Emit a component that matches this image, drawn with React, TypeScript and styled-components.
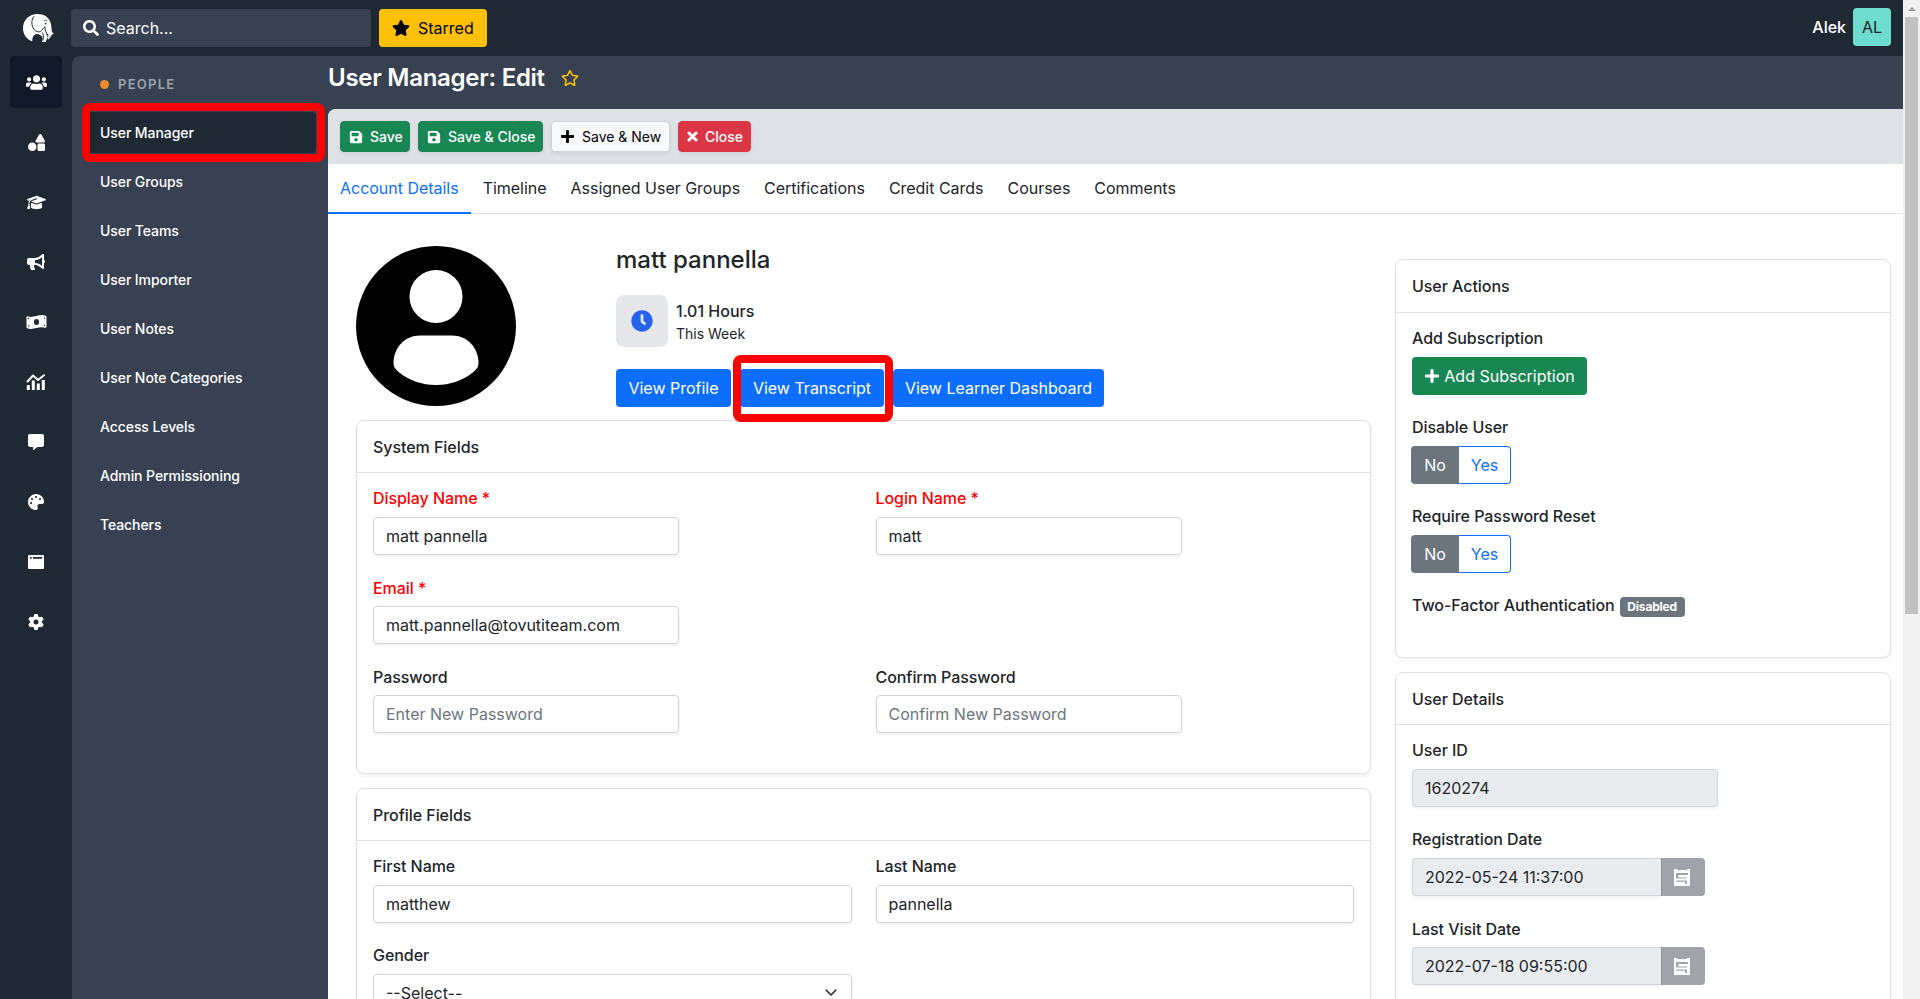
import React from "react";
import styled, { createGlobalStyle, css } from "styled-components";
import {
  FaUsers,
  FaShapes,
  FaBullhorn,
  FaSearch,
  FaStar,
  FaRegStar,
  FaSave,
  FaPlus,
  FaClock,
  FaPalette,
  FaCommentAlt,
} from "react-icons/fa";
import { FaGraduationCap, FaGear } from "react-icons/fa6";

const GlobalStyle = createGlobalStyle`
  *, *::before, *::after { box-sizing: border-box; }
  html, body, #root { height: 100%; }
  body {
    margin: 0;
    overflow: hidden;
    background: #1f2933;
    color: #212529;
    font: 400 16px/24px Inter, "Liberation Sans", sans-serif;
  }
  input, button { font: inherit; }
  svg { display: block; flex: none; }
`;

const Window = styled.div`
  display: flex;
  height: 999px;
`;

const Page = styled.div`
  flex: 1;
  min-width: 0;
  display: flex;
  flex-direction: column;
`;

const TopBar = styled.header`
  height: 56px;
  flex: none;
  display: flex;
  align-items: center;
  padding: 0 12px 0 22px;
`;

const SearchBox = styled.div`
  width: 300px;
  height: 38px;
  margin: 0 8px 0 16px;
  padding-left: 12px;
  display: flex;
  align-items: center;
  gap: 7px;
  border-radius: 4px;
  background: #384152;
  color: #fff;
`;

const StarredButton = styled.button`
  width: 108px;
  height: 38px;
  padding: 0 0 0 13px;
  display: flex;
  align-items: center;
  gap: 8px;
  border: 0;
  border-radius: 4px;
  background: #ffc107;
  color: #000;
`;

const Account = styled.div`
  margin-left: auto;
  display: flex;
  align-items: center;
  gap: 7px;
  margin-top: -2px;
  color: #fff;
  font-weight: 500;
`;

const Initials = styled.div`
  width: 38px;
  height: 38px;
  border-radius: 4px;
  background: #6edcce;
  color: #212529;
  font-weight: 400;
  display: flex;
  align-items: center;
  justify-content: center;
`;

const Body = styled.div`
  flex: 1;
  min-height: 0;
  display: flex;
`;

const Rail = styled.nav`
  width: 72px;
  flex: none;
  padding: 0 10px;
  display: flex;
  flex-direction: column;
  gap: 8px;
`;

const RailItem = styled.div<{ $active?: boolean }>`
  height: 52px;
  flex: none;
  display: flex;
  align-items: center;
  justify-content: center;
  border-radius: 4px;
  color: #fff;
  background: ${(p) => (p.$active ? "#111827" : "transparent")};
`;

const Shell = styled.div`
  flex: 1;
  min-width: 0;
  display: flex;
  border-top-left-radius: 8px;
  background: #384152;
`;

const SideMenu = styled.aside`
  width: 256px;
  flex: none;
  padding: 16px 12px 0 14px;
  color: #fff;
  font-size: 14px;
  font-weight: 500;
  letter-spacing: -0.08px;
`;

const MenuHeading = styled.div`
  height: 24px;
  margin-bottom: 16px;
  padding-left: 14px;
  display: flex;
  align-items: center;
  gap: 9px;
  color: #9ca3af;
  font-size: 13px;
  font-weight: 600;
  letter-spacing: 1.25px;
`;

const Dot = styled.span`
  width: 9px;
  height: 9px;
  border-radius: 50%;
  background: #ed8b2d;
`;

const MenuItem = styled.div<{ $active?: boolean }>`
  position: relative;
  height: 41px;
  margin-bottom: 8px;
  padding-left: 14px;
  display: flex;
  align-items: center;
  border-radius: 4px;
  background: ${(p) => (p.$active ? "#1f2933" : "transparent")};
`;

const Highlight = styled.span<{ $inset: string }>`
  position: absolute;
  z-index: 2;
  inset: ${(p) => p.$inset};
  border: 8px solid #fe0000;
  border-radius: 8px;
  pointer-events: none;
`;

const Main = styled.main`
  flex: 1;
  min-width: 0;
  display: flex;
  flex-direction: column;
`;

const TitleRow = styled.div`
  height: 53px;
  flex: none;
  padding-bottom: 9px;
  display: flex;
  align-items: center;
  gap: 16px;
`;

const Title = styled.h1`
  margin: 0;
  color: #fff;
  font-size: 24px;
  font-weight: 600;
  line-height: 30px;
  letter-spacing: -0.27px;
`;

const Content = styled.div`
  flex: 1;
  min-height: 0;
  overflow: hidden;
  border-top-left-radius: 8px;
  background: #fff;
`;

const Toolbar = styled.div`
  height: 55px;
  padding: 12px;
  display: flex;
  gap: 8px;
  background: #dee1e6;
`;

const tones = {
  green: css`
    background: #198754;
    border-color: #198754;
    color: #fff;
  `,
  light: css`
    background: #f8f9fb;
    border-color: #d0d4da;
    color: #000;
    font-weight: 400;
  `,
  red: css`
    background: #dc3545;
    border-color: #dc3545;
    color: #fff;
  `,
};

const ToolButton = styled.button<{ $tone: keyof typeof tones; $width: number }>`
  width: ${(p) => p.$width}px;
  height: 31px;
  padding: 0 0 0 8px;
  display: flex;
  align-items: center;
  gap: 7px;
  border: 1px solid;
  border-radius: 4px;
  box-shadow: 0 2px 4px rgba(0, 0, 0, 0.08);
  font-size: 14px;
  font-weight: 500;
  white-space: nowrap;
  ${(p) => tones[p.$tone]}
`;

const Tabs = styled.div`
  height: 50px;
  display: flex;
  border-bottom: 1px solid #dee2e6;
`;

const Tab = styled.div<{ $active?: boolean }>`
  height: 50px;
  padding: 12px 12px 0;
  white-space: nowrap;
  letter-spacing: -0.02px;
  color: ${(p) => (p.$active ? "#0d6efd" : "#212529")};
  border-bottom: 2px solid ${(p) => (p.$active ? "#0d6efd" : "transparent")};
`;

const Columns = styled.div`
  padding: 32px 12px 0 28px;
  display: flex;
  gap: 24px;
`;

const Primary = styled.section`
  width: 1015px;
  flex: none;
`;

const Secondary = styled.section`
  flex: 1;
  padding-top: 13px;
`;

const Profile = styled.div`
  height: 174px;
  display: flex;
  gap: 100px;
`;

const ProfileName = styled.h2`
  margin: -1px 0 20px;
  font-size: 24px;
  font-weight: 500;
  line-height: 30px;
`;

const Hours = styled.div`
  height: 52px;
  margin-bottom: 22px;
  display: flex;
  align-items: center;
  gap: 8px;
`;

const ClockTile = styled.div`
  width: 52px;
  height: 52px;
  display: flex;
  align-items: center;
  justify-content: center;
  border-radius: 8px;
  background: #e5e7eb;
  color: #2563eb;
`;

const HoursText = styled.div`
  padding-top: 1px;
  font-weight: 500;
  line-height: 23px;
`;

const HoursNote = styled.div`
  font-size: 14px;
  font-weight: 400;
  line-height: 21px;
`;

const ButtonRow = styled.div`
  display: flex;
  gap: 9px;
`;

const ActionButton = styled.button<{ $width: number; $green?: boolean }>`
  position: relative;
  width: ${(p) => p.$width}px;
  height: 38px;
  padding: 0;
  display: flex;
  align-items: center;
  justify-content: center;
  gap: 4px;
  border: 0;
  border-radius: 4px;
  background: ${(p) => (p.$green ? "#198754" : "#0d6efd")};
  color: #fff;
  white-space: nowrap;
`;

const Card = styled.div<{ $height: number }>`
  height: ${(p) => p.$height}px;
  margin-bottom: 14px;
  border: 1px solid #dfe0e2;
  border-radius: 8px;
  box-shadow: 0 2px 4px rgba(0, 0, 0, 0.06);
  background: #fff;
`;

const CardTitle = styled.div<{ $tall?: boolean }>`
  height: ${(p) => (p.$tall ? 53 : 52)}px;
  padding: 14px 16px 0;
  border-bottom: 1px solid #dfe0e2;
  font-weight: 500;
  letter-spacing: -0.05px;
`;

const FieldGrid = styled.div<{ $columns: number }>`
  padding: 13px 16px 0;
  display: grid;
  grid-template-columns: repeat(${(p) => p.$columns}, 1fr);
  column-gap: 24px;
  row-gap: 20px;
`;

const Field = styled.div<{ $column?: number }>`
  height: 69px;
  grid-column: ${(p) => p.$column ?? "auto"};
`;

const Label = styled.div<{ $required?: boolean; $low?: boolean }>`
  height: 31px;
  padding-top: ${(p) => (p.$low ? 1 : 0)}px;
  font-weight: 500;
  letter-spacing: -0.06px;
  color: ${(p) => (p.$required ? "#ff0000" : "#212529")};
`;

const control = css`
  height: 38px;
  padding: 0 12px;
  border: 1px solid #ced4da;
  border-radius: 4px;
  box-shadow: 0 2px 3px rgba(0, 0, 0, 0.05);
  color: #212529;
`;

const Input = styled.input<{ $width?: number }>`
  ${control}
  display: block;
  width: ${(p) => (p.$width ? `${p.$width}px` : "100%")};
  background: #fff;
  outline: 0;
  &::placeholder {
    color: #6c757d;
    opacity: 1;
  }
  &:disabled {
    background: #e9ecef;
    opacity: 1;
  }
`;

const SelectBox = styled.div`
  ${control}
  padding-right: 14px;
  display: flex;
  align-items: center;
  justify-content: space-between;
`;

const Toggle = styled.div`
  width: 100px;
  height: 38px;
  margin-left: -1px;
  display: flex;
`;

const ToggleOption = styled.div<{ $on?: boolean }>`
  display: flex;
  align-items: center;
  justify-content: center;
  ${(p) =>
    p.$on
      ? css`
          width: 48px;
          border-radius: 4px 0 0 4px;
          background: #6c757d;
          color: #fff;
        `
      : css`
          width: 52px;
          border: 1px solid #0d6efd;
          border-left: 0;
          border-radius: 0 4px 4px 0;
          color: #0d6efd;
        `}
`;

const InlineLabel = styled.div`
  display: flex;
  align-items: center;
  gap: 5px;
  font-weight: 500;
  letter-spacing: -0.06px;
`;

const Badge = styled.span`
  width: 65px;
  height: 20px;
  margin-top: 3px;
  display: flex;
  align-items: center;
  justify-content: center;
  border-radius: 4px;
  background: #6c757d;
  color: #fff;
  font-size: 12px;
  font-weight: 700;
  letter-spacing: -0.2px;
`;

const DateGroup = styled.div`
  display: flex;
  width: 293px;
  & > input {
    border-right: 0;
    border-radius: 4px 0 0 4px;
  }
`;

const DateButton = styled.div`
  width: 44px;
  height: 38px;
  flex: none;
  display: flex;
  align-items: center;
  justify-content: center;
  padding-right: 3px;
  border-left: 1px solid #8b929a;
  border-radius: 0 4px 4px 0;
  background: #a0a4aa;
`;

const ScrollTrack = styled.div`
  width: 17px;
  flex: none;
  display: flex;
  flex-direction: column;
  align-items: center;
  background: #f1f1f1;
`;

const ScrollArrow = styled.div`
  height: 17px;
  padding-top: 7px;
`;

const ScrollThumb = styled.div`
  width: 13px;
  height: 597px;
  background: #c1c1c1;
`;

const ElephantLogo = () => (
  <svg width="33" height="30" viewBox="0 0 33 30">
    <path
      fill="#fff"
      d="M15.5 1C22 1 27 4.400 28.600 9.600c.9 3 .6 6.600 1.500 9.400.4 1 1.200 1.300 1.900 1.100-.4 1.500-2.500 2-4 .7l2 .2c-.6 2.500-2.200 4.400-4 5.700l-.5-2.300-1.900 4.600h-3.600l.6-4.300c-1.300-2.400-3.300-3.700-5.600-3.700-2.800 0-4.600 2-4.800 7.400C5 26.600 1 21.400 1 15.200 1 7 7.500 1 15.500 1z"
    />
    <path
      fill="none"
      stroke="#1f2933"
      strokeWidth="1"
      d="M12.300 3.200c-3.200 2.900-3.200 9.600-.2 13.200 2.600 3 5.600 3.100 7.400 1.300 1.200-1.200 1.800-3.200 3.400-3.800 M22.900 14c.2 3.300.9 6.100 3.300 8.300M20.400 19.500c1 1.600 1.300 4.500.4 8.300"
    />
    <circle cx="23.600" cy="10.600" r="0.900" fill="#1f2933" />
    <path fill="none" stroke="#1f2933" strokeWidth="0.700" d="M21.500 8.200l1.800-.9 2.200.6" />
    <path fill="none" stroke="#1f2933" strokeWidth="0.800" d="M24.300 20.200l1.800 4.300" />
  </svg>
);

const MoneyIcon = () => (
  <svg width="21" height="14" viewBox="0 0 21 14">
    <path fill="#fff" d="M1.200 1.200c3.200 1.200 6.200.6 9.300-.2 3-.8 6-1.400 9.200-.2.500.2.800.5.800 1v10.300c0 .6-.6.900-1.200.7-3-1-6-.5-9 .2-3 .8-6 1.400-9.200.2-.4-.2-.6-.5-.6-.9V1.900c0-.5.300-.8.700-.7z" />
    <ellipse cx="10.500" cy="7" rx="2.600" ry="3" fill="#1f2933" />
    <path fill="#1f2933" d="M2 3h1.300v1.200H2zM2 10.200h1.300v1.200H2zM17.800 2.600H19v1.200h-1.200zM17.800 9.800H19V11h-1.200z" />
  </svg>
);

const ChartIcon = () => (
  <svg width="20" height="16" viewBox="0 0 20 16">
    <path fill="none" stroke="#fff" strokeWidth="2" strokeLinejoin="round" strokeLinecap="round" d="M1.500 7.500l5.500-6 5 4.500L18 1.200" />
    <path fill="#fff" d="M.8 11h3v5h-3zM5.800 6.500h3V16h-3zM10.800 9.500h3V16h-3zM15.800 6h3v10h-3z" />
  </svg>
);

const WindowIcon = () => (
  <svg width="16" height="14" viewBox="0 0 16 14">
    <path fill="#fff" fillRule="evenodd" d="M1 0h14a1 1 0 0 1 1 1v12a1 1 0 0 1-1 1H1a1 1 0 0 1-1-1V1a1 1 0 0 1 1-1zM2 2v1.800h1.600V2zM5 2v1.800h9V2z" />
  </svg>
);

const CrossIcon = () => (
  <svg width="11" height="11" viewBox="0 0 11 11">
    <path fill="none" stroke="#fff" strokeWidth="3" strokeLinecap="round" d="M2 2l7 7M9 2L2 9" />
  </svg>
);

const CalendarIcon = () => (
  <svg width="16" height="17" viewBox="0 0 16 17">
    <path fill="#fff" fillRule="evenodd" d="M0 0h3v1h10V0h3v17H0zM2 4v11h12V4z" />
    <path fill="#fff" d="M4.500 6H14v2.500H4.500zM2 9.500h11v2H2zM2 12.800h9V15H2zM13 8h1v7h-1z" />
  </svg>
);

const AvatarIcon = () => (
  <svg width="160" height="160" viewBox="0 0 160 160">
    <circle cx="80" cy="80" r="80" fill="#000" />
    <circle cx="80" cy="50.500" r="26.500" fill="#fff" />
    <path
      fill="#fff"
      d="M64 89.500h32c15.500 0 26.500 12.500 26.500 27.500 0 3.500-1.500 6-4.500 8.500C107 134.500 94 139 80 139s-27-4.500-38-13.500c-3-2.500-4.500-5-4.500-8.500 0-15 11-27.500 26.500-27.500z"
    />
  </svg>
);

const Chevron = () => (
  <svg width="12" height="8" viewBox="0 0 12 8">
    <path fill="none" stroke="#343a40" strokeWidth="1.700" strokeLinecap="round" strokeLinejoin="round" d="M1.200 1.200L6 6l4.800-4.800" />
  </svg>
);

const menuItems = [
  "User Manager",
  "User Groups",
  "User Teams",
  "User Importer",
  "User Notes",
  "User Note Categories",
  "Access Levels",
  "Admin Permissioning",
  "Teachers",
];

const tabs = [
  "Account Details",
  "Timeline",
  "Assigned User Groups",
  "Certifications",
  "Credit Cards",
  "Courses",
  "Comments",
];

const railIcons = [
  <FaUsers size={21} />,
  <FaShapes size={17} />,
  <FaGraduationCap size={19} />,
  <FaBullhorn size={18} />,
  <MoneyIcon />,
  <ChartIcon />,
  <FaCommentAlt size={16} />,
  <FaPalette size={16} />,
  <WindowIcon />,
  <FaGear size={16} />,
];

export default function App() {
  return (
    <Window>
      <GlobalStyle />
      <Page>
        <TopBar>
          <ElephantLogo />
          <SearchBox>
            <FaSearch size={16} />
            Search...
          </SearchBox>
          <StarredButton>
            <FaStar size={18} />
            Starred
          </StarredButton>
          <Account>
            Alek
            <Initials>AL</Initials>
          </Account>
        </TopBar>
        <Body>
          <Rail>
            {railIcons.map((icon, i) => (
              <RailItem key={i} $active={i === 0}>
                {icon}
              </RailItem>
            ))}
          </Rail>
          <Shell>
            <SideMenu>
              <MenuHeading>
                <Dot />
                PEOPLE
              </MenuHeading>
              {menuItems.map((item, i) => (
                <MenuItem key={item} $active={i === 0}>
                  {item}
                  {i === 0 && <Highlight $inset="-9px -9px -9px -4px" />}
                </MenuItem>
              ))}
            </SideMenu>
            <Main>
              <TitleRow>
                <Title>User Manager: Edit</Title>
                <FaRegStar size={18} color="#ffc107" />
              </TitleRow>
              <Content>
                <Toolbar>
                  <ToolButton $tone="green" $width={70}>
                    <FaSave size={14} />
                    Save
                  </ToolButton>
                  <ToolButton $tone="green" $width={125}>
                    <FaSave size={14} />
                    Save &amp; Close
                  </ToolButton>
                  <ToolButton $tone="light" $width={119}>
                    <FaPlus size={15} />
                    Save &amp; New
                  </ToolButton>
                  <ToolButton $tone="red" $width={73}>
                    <CrossIcon />
                    Close
                  </ToolButton>
                </Toolbar>
                <Tabs>
                  {tabs.map((tab, i) => (
                    <Tab key={tab} $active={i === 0}>
                      {tab}
                    </Tab>
                  ))}
                </Tabs>
                <Columns>
                  <Primary>
                    <Profile>
                      <AvatarIcon />
                      <div>
                        <ProfileName>matt pannella</ProfileName>
                        <Hours>
                          <ClockTile>
                            <FaClock size={22} />
                          </ClockTile>
                          <HoursText>
                            1.01 Hours
                            <HoursNote>This Week</HoursNote>
                          </HoursText>
                        </Hours>
                        <ButtonRow>
                          <ActionButton $width={115}>View Profile</ActionButton>
                          <ActionButton $width={144}>
                            View Transcript
                            <Highlight $inset="-14px -9px -15px -7px" />
                          </ActionButton>
                          <ActionButton $width={211}>View Learner Dashboard</ActionButton>
                        </ButtonRow>
                      </div>
                    </Profile>
                    <Card $height={354}>
                      <CardTitle>System Fields</CardTitle>
                      <FieldGrid $columns={2}>
                        <Field>
                          <Label $required>Display Name *</Label>
                          <Input $width={306} defaultValue="matt pannella" />
                        </Field>
                        <Field>
                          <Label $required>Login Name *</Label>
                          <Input $width={306} defaultValue="matt" />
                        </Field>
                        <Field $column={1}>
                          <Label $required $low>
                            Email *
                          </Label>
                          <Input $width={306} defaultValue="matt.pannella@tovutiteam.com" />
                        </Field>
                        <Field $column={1}>
                          <Label $low>Password</Label>
                          <Input $width={306} placeholder="Enter New Password" />
                        </Field>
                        <Field>
                          <Label $low>Confirm Password</Label>
                          <Input $width={306} placeholder="Confirm New Password" />
                        </Field>
                      </FieldGrid>
                    </Card>
                    <Card $height={354}>
                      <CardTitle>Profile Fields</CardTitle>
                      <FieldGrid $columns={2}>
                        <Field>
                          <Label>First Name</Label>
                          <Input defaultValue="matthew" />
                        </Field>
                        <Field>
                          <Label>Last Name</Label>
                          <Input defaultValue="pannella" />
                        </Field>
                        <Field>
                          <Label>Gender</Label>
                          <SelectBox>
                            --Select--
                            <Chevron />
                          </SelectBox>
                        </Field>
                      </FieldGrid>
                    </Card>
                  </Primary>
                  <Secondary>
                    <Card $height={399}>
                      <CardTitle $tall>User Actions</CardTitle>
                      <FieldGrid $columns={1}>
                        <Field>
                          <Label>Add Subscription</Label>
                          <ActionButton $green $width={175}>
                            <FaPlus size={16} />
                            Add Subscription
                          </ActionButton>
                        </Field>
                        <Field>
                          <Label>Disable User</Label>
                          <Toggle>
                            <ToggleOption $on>No</ToggleOption>
                            <ToggleOption>Yes</ToggleOption>
                          </Toggle>
                        </Field>
                        <Field>
                          <Label>Require Password Reset</Label>
                          <Toggle>
                            <ToggleOption $on>No</ToggleOption>
                            <ToggleOption>Yes</ToggleOption>
                          </Toggle>
                        </Field>
                        <InlineLabel>
                          Two-Factor Authentication
                          <Badge>Disabled</Badge>
                        </InlineLabel>
                      </FieldGrid>
                    </Card>
                    <Card $height={500}>
                      <CardTitle>User Details</CardTitle>
                      <FieldGrid $columns={1}>
                        <Field>
                          <Label>User ID</Label>
                          <Input $width={306} disabled defaultValue="1620274" />
                        </Field>
                        <Field>
                          <Label>Registration Date</Label>
                          <DateGroup>
                            <Input disabled defaultValue="2022-05-24 11:37:00" />
                            <DateButton>
                              <CalendarIcon />
                            </DateButton>
                          </DateGroup>
                        </Field>
                        <Field>
                          <Label $low>Last Visit Date</Label>
                          <DateGroup>
                            <Input disabled defaultValue="2022-07-18 09:55:00" />
                            <DateButton>
                              <CalendarIcon />
                            </DateButton>
                          </DateGroup>
                        </Field>
                      </FieldGrid>
                    </Card>
                  </Secondary>
                </Columns>
              </Content>
            </Main>
          </Shell>
        </Body>
      </Page>
      <ScrollTrack>
        <ScrollArrow>
          <svg width="8" height="4" viewBox="0 0 8 4">
            <path fill="#a3a3a3" d="M4 0l4 4H0z" />
          </svg>
        </ScrollArrow>
        <ScrollThumb />
      </ScrollTrack>
    </Window>
  );
}
